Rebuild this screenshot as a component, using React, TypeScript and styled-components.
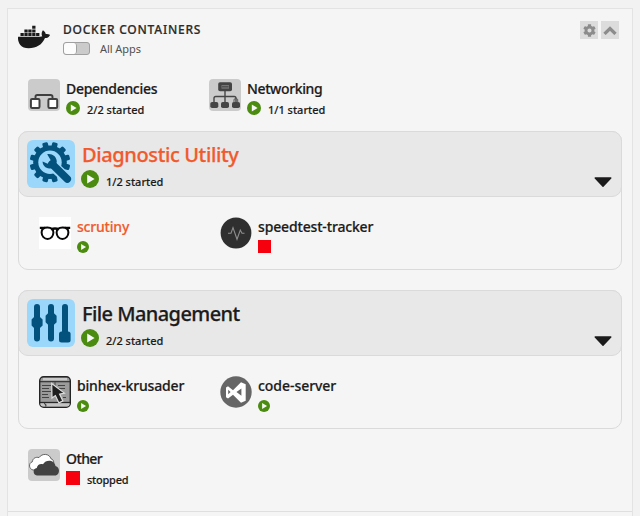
import React from 'react';
import styled, { createGlobalStyle } from 'styled-components';
import { FaCog, FaDocker } from 'react-icons/fa';

const ink = '#1c1b1b';
const orange = '#f15a2c';

const GlobalStyle = createGlobalStyle`
  * { box-sizing: border-box; }
  body { margin: 0; background: #f2f2f2; overflow: hidden; }
  svg { display: block; flex: none; }
`;

const Page = styled.div`
  height: 516px;
  padding: 8px 7px 0;
  overflow: hidden;
  font-family: "Noto Sans", "Liberation Sans", sans-serif;
  color: ${ink};
`;

const Panel = styled.section`
  display: flex;
  flex-direction: column;
  height: 520px;
  padding: 0 10px;
  border: 1px solid #e3e3e3;
  background: #f5f5f5;
`;

const Header = styled.header`
  display: flex;
  align-items: flex-start;
  height: 60px;
  padding-top: 12px;
`;

const Brand = styled.div`
  width: 45px;
`;

const HeaderText = styled.div`
  flex: 1;
`;

const Title = styled.h1`
  margin: 0;
  height: 20px;
  font-size: 12px;
  font-weight: 500;
  line-height: 17px;
  letter-spacing: 0.77px;
  color: #2b2a29;
  -webkit-text-stroke: 0.2px;
`;

const SwitchRow = styled.label`
  display: flex;
  align-items: center;
  gap: 10px;
  height: 14px;
  font-size: 11px;
  letter-spacing: -0.05px;
  color: #505050;
`;

const Switch = styled.span`
  width: 27px;
  height: 13px;
  border: 1px solid #a0a0a0;
  border-radius: 3px;
  background: #cbcbcb;
`;

const Knob = styled.span`
  display: block;
  width: 13px;
  height: 11px;
  border-right: 1px solid #a0a0a0;
  border-radius: 3px;
  background: #fcfcfc;
`;

const Tools = styled.div`
  display: flex;
  gap: 3px;
  padding-right: 3px;
`;

const ToolButton = styled.button`
  display: grid;
  place-items: center;
  width: 18px;
  height: 18px;
  padding: 0;
  border: 0;
  background: #dcdcdc;
  color: #8c8c8c;
`;

const LooseRow = styled.div<{ $top: number; $height: number }>`
  display: flex;
  flex: none;
  margin-top: ${(p) => p.$top}px;
  height: ${(p) => p.$height}px;
  padding-left: 10px;
`;

const Item = styled.div`
  display: flex;
  gap: 6px;
  width: 181px;
`;

const Details = styled.div``;

const Name = styled.div<{ $spacing?: number; $alert?: boolean }>`
  height: 22px;
  font-size: 14px;
  font-weight: 500;
  line-height: 20px;
  letter-spacing: ${(p) => p.$spacing ?? -0.3}px;
  white-space: nowrap;
  color: ${(p) => (p.$alert ? orange : ink)};
  -webkit-text-stroke: 0.2px;
`;

const Status = styled.div<{ $gap: number; $height?: number }>`
  display: flex;
  align-items: center;
  gap: ${(p) => p.$gap}px;
  height: ${(p) => p.$height ?? 14}px;
`;

const StatusText = styled.span<{ $drop: number; $spacing?: number }>`
  padding-top: ${(p) => p.$drop}px;
  font-size: 11px;
  font-weight: 500;
  line-height: 14px;
  letter-spacing: ${(p) => p.$spacing ?? -0.02}px;
  -webkit-text-stroke: 0.15px;
`;

const StopMark = styled.span<{ $size: number }>`
  width: ${(p) => p.$size}px;
  height: ${(p) => p.$size}px;
  background: #f5000c;
`;

const Tile = styled.div<{ $size: number; $color: string; $radius: number }>`
  flex: none;
  width: ${(p) => p.$size}px;
  height: ${(p) => p.$size}px;
  border-radius: ${(p) => p.$radius}px;
  background: ${(p) => p.$color};
`;

const Group = styled.section<{ $top: number }>`
  flex: none;
  height: 139px;
  margin-top: ${(p) => p.$top}px;
  border: 1px solid #dadada;
  border-radius: 10px;
`;

const GroupHead = styled.div`
  display: flex;
  gap: 6px;
  height: 66px;
  margin: -1px -1px 0;
  padding: 8px;
  border: 1px solid #dadada;
  border-radius: 10px;
  background: #e8e8e8;
`;

const GroupDetails = styled.div`
  flex: 1;
`;

const GroupName = styled.h2<{ $spacing: number; $alert?: boolean }>`
  margin: 0;
  height: 30px;
  padding-left: 1px;
  font-size: 20px;
  font-weight: 500;
  line-height: 30px;
  letter-spacing: ${(p) => p.$spacing}px;
  color: ${(p) => (p.$alert ? orange : ink)};
  -webkit-text-stroke: 0.25px;
`;

const GroupCaret = styled.div`
  align-self: flex-end;
  padding-right: 1px;
`;

const GroupItems = styled.div`
  display: flex;
  padding: 20px 0 0 20px;
`;

const Divider = styled.hr`
  flex: none;
  height: 1px;
  margin: 0 -10px;
  border: 0;
  background: #dfdfdf;
`;

const Play = ({ size }: { size: number }) => (
  <svg width={size} height={size} viewBox="0 0 18 18">
    <circle cx="9" cy="9" r="9" fill="#4b8b0f" />
    <path d="M6.2 4.5v9L13.6 9Z" fill="#f7f7f7" />
  </svg>
);

const Caret = () => (
  <svg width="18" height="11" viewBox="0 0 18 11">
    <path d="M1.2 1h15.6L9 9.3Z" fill={ink} stroke={ink} strokeWidth="1.4" strokeLinejoin="round" />
  </svg>
);

const ChevronUp = () => (
  <svg width="14" height="10" viewBox="0 0 14 10">
    <path d="M1.5 8.9 7 3.5l5.5 5.4" fill="none" stroke="currentColor" strokeWidth="3.3" />
  </svg>
);

const DependenciesArt = () => (
  <svg width="32" height="32" viewBox="0 0 32 32">
    <path d="M7.5 19.5v-1.800q0-1.700 1.700-1.700h13.400q1.900 0 1.900 1.700v1.800" fill="none" stroke="#3f3f3f" strokeWidth="1.900" />
    <rect x="2.9" y="20" width="8.6" height="9" rx="1.2" fill="#fff" stroke="#3f3f3f" strokeWidth="2" />
    <rect x="20.4" y="20" width="8.8" height="9" rx="1.2" fill="#fff" stroke="#3f3f3f" strokeWidth="2" />
  </svg>
);

const NetworkingArt = () => (
  <svg width="32" height="32" viewBox="0 0 32 32">
    <path d="M16 11v13M5 24v-4.700q0-1.800 1.800-1.800h18.400q1.800 0 1.800 1.800V24" fill="none" stroke="#454545" strokeWidth="1.400" />
    <rect x="9.2" y="3.2" width="13.8" height="9" rx="1.8" fill="#444" />
    <path d="M12.5 6h7.500v3.700h-7.500z" fill="#777" />
    <path d="M13 7.800h6.500" stroke="#444" />
    <rect x="1.3" y="23" width="8" height="6" rx="1.8" fill="#444" />
    <rect x="12" y="23" width="8" height="6" rx="1.8" fill="#444" />
    <rect x="23" y="23" width="8" height="6" rx="1.8" fill="#444" />
    <path d="M25 23.500v-3.200q1.800-1.700 3.700 0v3.200" fill="none" stroke="#555" />
  </svg>
);

const UtilityArt = () => (
  <svg width="48" height="48" viewBox="0 0 48 48">
    <g fill="#03517d">
      {Array.from({ length: 12 }, (_, i) => (
        <rect key={i} x="20.2" y="2" width="5.6" height="10" rx="1.4" transform={`rotate(${i * 30 + 15} 23 22.3)`} />
      ))}
      <circle cx="23" cy="22.3" r="16.8" />
    </g>
    <circle cx="23" cy="22.3" r="11.7" fill="#9ad7fa" />
    <path d="M25 25 41 39.500" stroke="#9ad7fa" strokeWidth="11" strokeLinecap="round" />
    <path d="M25 24 40.300 39" stroke="#03517d" strokeWidth="7.500" strokeLinecap="round" />
    <path d="M20.200 14.200c5-.8 9.300 2.300 9.600 7.300l-1.500 6.600-5.400.3c-4.200.3-7.300-2.800-7.300-6.800l5.100 2.100 3.200-3.300Z" fill="#03517d" />
  </svg>
);

const SlidersArt = () => (
  <svg width="48" height="48" viewBox="0 0 48 48">
    <path d="M10 8v31.500M24 8v31.500M38 8v31.500" stroke="#03517d" strokeWidth="6" strokeLinecap="round" />
    <g fill="#03517d">
      <path d="M7.300 17.800h5.400l2.900 2.700v6l-2.900 2.700H7.300l-2.700-2.700v-6Z" />
      <path d="M21.300 14h5.400l2.900 2.700v6.600L26.700 26h-5.400l-2.700-2.700v-6.600Z" />
      <rect x="32" y="32.5" width="11.6" height="11" rx="2.5" />
    </g>
  </svg>
);

const GlassesArt = () => (
  <svg width="32" height="32" viewBox="0 0 32 32">
    <g fill="none" stroke="#080808">
      <path d="M.8 10.800h5M31.200 10.800h-5M12 12.500q4-2 8 0" strokeWidth="2.300" />
      <path d="M2.600 15.500c0-3.700 2-4.900 5.800-4.900s6 1.500 6 5-2.500 6.300-5.800 6.300-6-2.700-6-6.400Z" strokeWidth="2" />
      <path d="M29.400 15.500c0-3.700-2-4.900-5.800-4.900s-6 1.500-6 5 2.500 6.300 5.800 6.300 6-2.700 6-6.400Z" strokeWidth="2" />
    </g>
  </svg>
);

const SpeedtestArt = () => (
  <svg width="32" height="32" viewBox="0 0 32 32">
    <circle cx="16" cy="16" r="15.4" fill="#2f2f2f" />
    <path d="M8 16.200h3l2-5.600 4 11.700 3.300-9.300 1.700 3.200h2.500" fill="none" stroke="#8f8f8f" strokeWidth="1.100" />
  </svg>
);

const KrusaderArt = () => (
  <svg width="32" height="32" viewBox="0 0 32 32">
    <rect x=".7" y=".7" width="30.600" height="30.600" rx="4" fill="#9b9b9b" stroke="#242424" strokeWidth="1.400" />
    <path d="M4 2h24v2.300H4z" fill="#c9c9c9" />
    <path d="M1 5.700h30" stroke="#292929" strokeWidth="1.100" />
    <path d="M1.500 27h29v1.500q0 2-2.500 2H4q-2.500 0-2.500-2Z" fill="#c4c4c4" />
    <path d="M1 26.500h30" stroke="#292929" strokeWidth="1.300" />
    <path d="M3 9.500h9M3 12.500h7M3 15.500h9M3 18.500h6M3 21.500h7M16 6v4M19 9.500h7M20 12.500h6M24 21.500h3" stroke="#444" />
    <path d="M5 27.500q3 .5 1.800 3" fill="none" stroke="#292929" />
    <path d="m12.700 7.500.3 14.600 3.400-2.500 3.500 7.300 4-2-3.300-6.800 4.800-1Z" fill="#1f1f1f" stroke="#dedede" strokeWidth="1.200" />
  </svg>
);

const CodeArt = () => (
  <svg width="32" height="32" viewBox="0 0 32 32">
    <circle cx="16" cy="16" r="15.700" fill="#666" />
    <path
      d="m6 11.500 2-1.200 5 4 8-8 4.700 2v16.400l-4.700 2-8-8-5 3.800-2-1.300Zm2.200 2.200v4.500l2.400-2.300Zm13.200-1.200-4.900 3.500 4.900 3.800Z"
      fill="#fff"
      fillRule="evenodd"
    />
  </svg>
);

const CloudArt = () => (
  <svg width="32" height="32" viewBox="0 0 32 32">
    <path
      d="M5 21c-4-.8-5-6.800-.6-8.300C4.700 9.200 8 7.600 11 8.600c3-4.600 10.500-4.200 12 1.200 3.500.8 3.500 5.700 1 7.200L14 21Z"
      fill="#fff"
      stroke="#555"
      strokeWidth=".9"
    />
    <path
      d="M9 26.400c-4.300-.3-4.600-6.800-.2-7.300.2-3.300 3.600-4.900 6.200-3.900 3.200-5.300 11.500-4.200 12.500 1.700 4.500.8 4.700 8.600.3 9.500Z"
      fill="#424242"
    />
  </svg>
);

type AppProps = {
  name: string;
  art: React.ReactNode;
  tile?: string;
  spacing?: number;
  alert?: boolean;
  stopped?: boolean;
};

const AppItem = ({ name, art, tile = 'transparent', spacing, alert, stopped }: AppProps) => (
  <Item>
    <Tile $size={32} $color={tile} $radius={0}>{art}</Tile>
    <Details>
      <Name $spacing={spacing} $alert={alert}>{name}</Name>
      <Status $gap={0} $height={stopped ? 15 : 16}>
        {stopped ? <StopMark $size={13} /> : <Play size={12} />}
      </Status>
    </Details>
  </Item>
);

type FolderProps = { name: string; art: React.ReactNode; status: string; spacing?: number; stopped?: boolean };

const FolderItem = ({ name, art, status, spacing, stopped }: FolderProps) => (
  <Item>
    <Tile $size={32} $color="#cbcbcb" $radius={4}>{art}</Tile>
    <Details>
      <Name $spacing={spacing}>{name}</Name>
      <Status $gap={7}>
        {stopped ? <StopMark $size={14} /> : <Play size={14} />}
        <StatusText $drop={3} $spacing={stopped ? -0.25 : undefined}>{status}</StatusText>
      </Status>
    </Details>
  </Item>
);

type GroupProps = {
  name: string;
  art: React.ReactNode;
  status: string;
  spacing: number;
  top: number;
  alert?: boolean;
  children: React.ReactNode;
};

const FolderGroup = ({ name, art, status, spacing, top, alert, children }: GroupProps) => (
  <Group $top={top}>
    <GroupHead>
      <Tile $size={48} $color="#9ad7fa" $radius={6}>{art}</Tile>
      <GroupDetails>
        <GroupName $spacing={spacing} $alert={alert}>{name}</GroupName>
        <Status $gap={7} $height={18}>
          <Play size={18} />
          <StatusText $drop={6}>{status}</StatusText>
        </Status>
      </GroupDetails>
      <GroupCaret><Caret /></GroupCaret>
    </GroupHead>
    <GroupItems>{children}</GroupItems>
  </Group>
);

export default function App() {
  return (
    <Page>
      <GlobalStyle />
      <Panel>
        <Header>
          <Brand><FaDocker size={32} color={ink} /></Brand>
          <HeaderText>
            <Title>DOCKER CONTAINERS</Title>
            <SwitchRow>
              <Switch><Knob /></Switch>
              All Apps
            </SwitchRow>
          </HeaderText>
          <Tools>
            <ToolButton aria-label="Settings"><FaCog size={13} /></ToolButton>
            <ToolButton aria-label="Collapse"><ChevronUp /></ToolButton>
          </Tools>
        </Header>
        <LooseRow $top={10} $height={52}>
          <FolderItem name="Dependencies" art={<DependenciesArt />} status="2/2 started" />
          <FolderItem name="Networking" art={<NetworkingArt />} status="1/1 started" spacing={-0.38} />
        </LooseRow>
        <FolderGroup name="Diagnostic Utility" art={<UtilityArt />} status="1/2 started" spacing={-0.38} top={0} alert>
          <AppItem name="scrutiny" art={<GlassesArt />} tile="#fff" spacing={-0.2} alert />
          <AppItem name="speedtest-tracker" art={<SpeedtestArt />} spacing={-0.16} stopped />
        </FolderGroup>
        <FolderGroup name="File Management" art={<SlidersArt />} status="2/2 started" spacing={-0.58} top={20}>
          <AppItem name="binhex-krusader" art={<KrusaderArt />} spacing={-0.18} />
          <AppItem name="code-server" art={<CodeArt />} spacing={-0.05} />
        </FolderGroup>
        <LooseRow $top={20} $height={62}>
          <FolderItem name="Other" art={<CloudArt />} status="stopped" spacing={-0.6} stopped />
        </LooseRow>
        <Divider />
      </Panel>
    </Page>
  );
}
